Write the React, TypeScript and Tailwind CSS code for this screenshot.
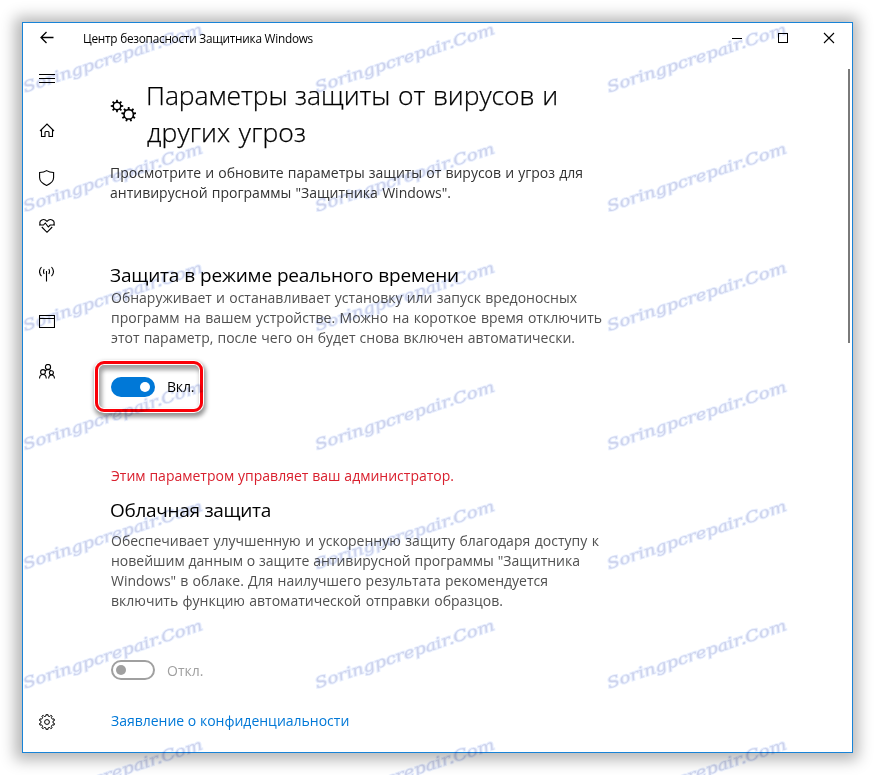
import type { ReactNode } from "react";

function Icon({ size = 16, children }: { size?: number; children: ReactNode }) {
  return (
    <svg width={size} height={size} viewBox={`0 0 ${size} ${size}`} fill="none" stroke="currentColor" strokeWidth="1.1" className="block">
      {children}
    </svg>
  );
}

function gearPath(cx: number, cy: number, inner: number, outer: number, teeth: number) {
  const step = (Math.PI * 2) / teeth;
  const points: string[] = [];
  for (let i = 0; i < teeth; i++) {
    const a = i * step - Math.PI / 2;
    [[-0.26, inner], [-0.17, outer], [0.17, outer], [0.26, inner]].forEach(([t, r]) => {
      points.push(`${(cx + Math.cos(a + t * step) * r).toFixed(2)} ${(cy + Math.sin(a + t * step) * r).toFixed(2)}`);
    });
  }
  return `M${points.join("L")}Z`;
}

function Line({ className, children }: { className: string; children: string }) {
  return <div className={`whitespace-nowrap [text-align-last:justify] ${className}`}>{children}</div>;
}

function Watermarks() {
  return (
    <div aria-hidden="true" className="pointer-events-none absolute inset-0 overflow-hidden">
      <svg width="875" height="775" className="block mix-blend-multiply">
        {[0, 1, 2, 3, 4, 5, 6].map((row) =>
          [0, 1, 2].map((col) => (
            <g key={`${row}-${col}`} transform={`translate(${25 + col * 292} ${92.5 + row * 119.2}) rotate(-18.3)`}>
              <text
                textLength="188"
                lengthAdjust="spacingAndGlyphs"
                className="fill-[#ced3ec] stroke-[#e8effe] stroke-[1.8px] font-['DejaVu_Serif','Liberation_Serif',serif] text-[15px] italic [paint-order:stroke]"
              >
                Soringpcrepair.Com
              </text>
            </g>
          )),
        )}
      </svg>
    </div>
  );
}

export default function App() {
  return (
    <div className="relative h-[775px] w-[875px] overflow-hidden bg-white p-[22px] font-['Open_Sans','Noto_Sans',sans-serif] text-black">
      <div className="flex h-[731px] w-[831px] flex-col border border-[#1883d7] bg-white shadow-[-1px_1px_14px_6px_rgba(0,0,0,0.29)]">
        <header className="flex h-[30px] shrink-0 items-center">
          <div className="flex w-[60px] pl-4">
            <Icon>
              <path d="M14.5 7.5H2M7.5 2L2 7.5L7.5 13" strokeWidth="1.3" />
            </Icon>
          </div>
          <Line className="w-[230px] text-[11.8px] leading-4 tracking-[-0.25px]">Центр безопасности Защитника Windows</Line>
          <div className="ml-auto flex items-center gap-[30px] pr-[15px]">
            <Icon><path d="M3 8.5H13" strokeWidth="1" /></Icon>
            <Icon><rect x="3.5" y="3.5" width="9" height="9" strokeWidth="1" /></Icon>
            <Icon><path d="M3 3L13 13M13 3L3 13" /></Icon>
          </div>
        </header>

        <div className="flex min-h-0 flex-1">
          <nav className="flex w-[88px] shrink-0 flex-col items-start pl-4 pt-[18px]">
            <Icon>
              <path d="M0 3.5H16M0 7.5H16M0 11.5H16" strokeWidth="1" />
            </Icon>
            <div className="mt-[36px]">
              <Icon>
                <path d="M1 8L8 1L15 8M2.5 6.8V13.5H6V9.5Q6 8.5 7 8.5H9Q10 8.5 10 9.5V13.5H13.5V6.8" />
              </Icon>
            </div>
            <div className="mt-[31px]">
              <Icon>
                <path d="M7.6 .6Q5 2.5 .6 2.5V7.5C.6 11.8 4.3 14 7.6 15.4C10.9 14 14.6 11.8 14.6 7.5V2.5Q10.5 2.5 7.6 .6Z" />
              </Icon>
            </div>
            <div className="mt-8">
              <Icon>
                <path d="M1.2 6.6C-.5 2 5 -.3 8 3.4C11 -.3 16.5 2 14.8 6.6M2.8 9L8 14.3L13.2 9M0 7H4.5L6.3 5L9.3 9L11.2 7H16" />
              </Icon>
            </div>
            <div className="mt-8">
              <Icon>
                <path d="M7.5 5V15.5M5.2 3Q3.8 5.5 5.2 8M9.8 3Q11.2 5.5 9.8 8M2.5 1Q-1.5 5.5 2.5 10.2M12.5 1Q16.5 5.5 12.5 10.2" />
              </Icon>
            </div>
            <div className="mt-8">
              <Icon>
                <path d="M.5 1.5H15.5V13.5H.5ZM.5 4.5H15.5" />
              </Icon>
            </div>
            <div className="mt-[34px]">
              <Icon>
                <circle cx="9" cy="3" r="2.6" />
                <circle cx="4" cy="8" r="2.4" />
                <circle cx="12.4" cy="8.8" r="2" />
                <path d="M.5 14.5C.8 9.2 7 9.2 7.3 14.5M9.6 14.5C10 9.8 15.2 9.8 15.5 14.5M6.2 7Q9 4 12 6.8" />
              </Icon>
            </div>
            <div className="mb-[22px] mt-auto">
              <Icon>
                <path d={gearPath(8, 8, 6.1, 7.7, 10)} strokeWidth="1" />
                <circle cx="8" cy="8" r="2.4" strokeWidth="1" />
              </Icon>
            </div>
          </nav>

          <main className="flex min-w-0 flex-1 flex-col pt-6">
            <div className="flex">
              <div className="-ml-px mt-[22px] w-[36px] shrink-0">
                <Icon size={28}>
                  <path d={gearPath(7, 7, 4.5, 6.3, 8)} fill="currentColor" stroke="none" />
                  <circle cx="7" cy="7" r="3" fill="white" stroke="none" />
                  <path d={gearPath(18.7, 15.4, 5.5, 7.4, 9)} fill="currentColor" stroke="none" />
                  <circle cx="18.7" cy="15.4" r="3.9" fill="white" stroke="none" />
                </Icon>
              </div>
              <h1 className="text-[26.5px] font-light leading-[37px] [-webkit-text-stroke:0.25px_black]">
                <Line className="w-[412px] tracking-[-0.05px]">Параметры защиты от вирусов и</Line>
                <Line className="ml-px w-[159px] tracking-[0.1px]">других угроз</Line>
              </h1>
            </div>
            <div className="-ml-px mt-3 text-[14px] leading-5 text-[#333]">
              <Line className="w-[473px]">Просмотрите и обновите параметры защиты от вирусов и угроз для</Line>
              <Line className="w-[341px]">антивирусной программы "Защитника Windows".</Line>
            </div>

            <h2 className="-ml-px mt-[59px] text-[19px] leading-[26px]">
              <Line className="w-[349px] tracking-[-0.18px]">Защита в режиме реального времени</Line>
            </h2>
            <div className="text-[14px] leading-5 text-[#505050]">
              <Line className="w-[466px]">Обнаруживает и останавливает установку или запуск вредоносных</Line>
              <Line className="w-[491px]">программ на вашем устройстве. Можно на короткое время отключить</Line>
              <Line className="w-[464px]">этот параметр, после чего он будет снова включен автоматически.</Line>
            </div>

            <div className="-ml-4 mt-[13px] flex h-[51px] w-[108px] shrink-0 items-center rounded-[9px] border-[3px] border-[#fa0008] pl-[13px] shadow-[0_0_0_1px_white,1px_3px_4px_2px_rgba(0,0,0,0.42),inset_0_0_0_1px_white,inset_2px_4px_4px_2px_rgba(0,0,0,0.36)]">
              <div className="flex h-5 w-11 items-center justify-end rounded-full bg-[#0078d7] pr-[5px]">
                <div className="size-[10px] rounded-full bg-white" />
              </div>
              <Line className="ml-3 w-[27px] pt-px text-[14px] leading-5 tracking-[-0.2px]">Вкл.</Line>
            </div>

            <Line className="mt-[54px] w-[343px] text-[14px] leading-5 text-[#d9202e]">Этим параметром управляет ваш администратор.</Line>
            <h2 className="-ml-px mt-[11px] text-[19px] leading-[26px]">
              <Line className="w-[161px] tracking-[-0.3px]">Облачная защита</Line>
            </h2>
            <div className="mt-2 text-[14px] leading-5 text-[#505050]">
              <Line className="w-[488px]">Обеспечивает улучшенную и ускоренную защиту благодаря доступу к</Line>
              <Line className="w-[469px]">новейшим данным о защите антивирусной программы "Защитника</Line>
              <Line className="w-[437px]">Windows" в облаке. Для наилучшего результата рекомендуется</Line>
              <Line className="w-[392px]">включить функцию автоматической отправки образцов.</Line>
            </div>

            <div className="mt-[49px] flex h-5 items-center">
              <div className="flex h-5 w-11 items-center rounded-full border-2 border-[#a0a0a0] pl-[3px]">
                <div className="size-[10px] rounded-full bg-[#a0a0a0]" />
              </div>
              <Line className="ml-3 w-9 pt-px text-[14px] leading-5 text-[#a0a0a0]">Откл.</Line>
            </div>
            <a className="mt-[31px] block text-[#0078d7]">
              <Line className="w-[237px] text-[14px] leading-5">Заявление о конфиденциальности</Line>
            </a>
          </main>

          <div className="w-1 shrink-0 pt-4">
            <div className="h-[274px] w-[2px] bg-[#7a7a7a]" />
          </div>
        </div>
      </div>
      <Watermarks />
    </div>
  );
}
